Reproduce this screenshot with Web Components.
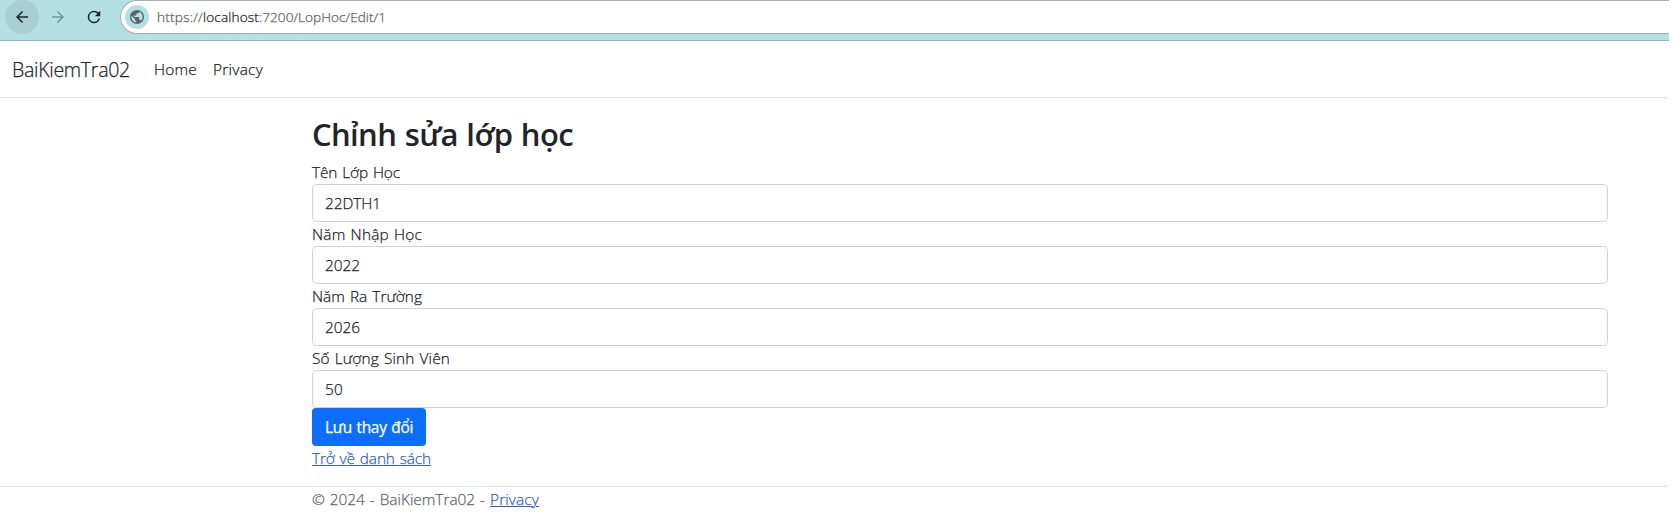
<!DOCTYPE html>
<html lang="vi"><head><meta charset="utf-8"><title>BaiKiemTra02</title>
<style>html,body{margin:0;background:#fff}body{font:300 15.4px/24px "Open Sans","Noto Sans",sans-serif;color:#212529;overflow:hidden;-webkit-text-stroke-width:.25px}</style></head><body>
<edit-page></edit-page>
<script>
const define=(name,html,init)=>customElements.define(name,class extends HTMLElement{
  constructor(){super();this.attachShadow({mode:'open'}).innerHTML=html;}
  connectedCallback(){if(init)init(this,this.shadowRoot);}
});

// Text run whose tracking is tuned so it occupies a given width.
define('fit-text','<style>:host{display:inline-block;white-space:pre;word-spacing:1px}</style><span><slot></slot></span>',(el,root)=>{
  const s=root.querySelector('span'),w=+el.getAttribute('w'),n=el.textContent.length;
  s.style.letterSpacing=(w-s.getBoundingClientRect().width)/n+'px';
});

define('browser-bar',`<style>
:host{display:flex;box-sizing:border-box;height:41px;width:1669px;background:#b5e0e3;border-bottom:1px solid #98b0b3}
.back{width:34px;height:34px;border-radius:50%;background:#a8d0d3;margin-left:5px;display:grid;place-items:center}
.btn{width:36px;height:34px;display:grid;place-items:center}
.btn:nth-of-type(2){margin-left:1px}
.url{flex:1;box-sizing:border-box;height:34px;margin-left:8px;background:#fff;border:1px solid #a9afb0;border-right:0;border-radius:17px 0 0 17px;display:flex;align-items:center;padding-left:4px;font:300 13.6px/20px "Open Sans","Noto Sans",sans-serif;color:#5a5e60}
.globe{width:24px;height:24px;border-radius:50%;background:#b5e0e3;display:grid;place-items:center;margin-right:8px}
.host{color:#202124} svg{display:block}
</style>
<div class="back"><svg width="16" height="16" viewBox="4 4 16 16" fill="#1c2526"><path d="M20 11H7.83l5.59-5.59L12 4l-8 8 8 8 1.41-1.41L7.83 13H20v-2z" transform="translate(12 12) scale(.75) translate(-12 -12)"/></svg></div>
<div class="btn"><svg width="16" height="16" viewBox="4 4 16 16" fill="#76979a"><path d="M12 4l-1.41 1.41L16.17 11H4v2h12.17l-5.58 5.59L12 20l8-8z" transform="translate(12 12) scale(.75) translate(-12 -12)"/></svg></div>
<div class="btn"><svg width="18" height="18" viewBox="3 3 18 18" fill="#1c2526"><path d="M17.65 6.35A7.95 7.95 0 0 0 12 4a8 8 0 1 0 7.73 10h-2.08A6 6 0 1 1 12 6c1.66 0 3.14.69 4.22 1.78L13 11h7V4l-2.35 2.35z" transform="translate(12 12) scale(.78) translate(-12 -12)"/></svg></div>
<div class="url"><span class="globe"><svg width="14" height="14" viewBox="2 2 20 20" fill="#5a666a"><path d="M12 2C6.48 2 2 6.48 2 12s4.48 10 10 10 10-4.48 10-10S17.52 2 12 2zm-1 17.93c-3.95-.49-7-3.85-7-7.93 0-.62.08-1.21.21-1.79L9 15v1c0 1.1.9 2 2 2v1.93zm6.9-2.54c-.26-.81-1-1.39-1.9-1.39h-1v-3c0-.55-.45-1-1-1H8v-2h2c.55 0 1-.45 1-1V7h2c1.1 0 2-.9 2-2v-.41c2.93 1.19 5 4.06 5 7.41 0 2.08-.8 3.97-2.1 5.39z"/></svg></span><fit-text w="46">https://</fit-text><fit-text w="56" class="host">localhost</fit-text><fit-text w="127">:7200/LopHoc/Edit/1</fit-text></div>`);

define('site-nav',`<style>
:host{display:flex;align-items:center;width:1669px;height:57px;box-sizing:border-box;border-bottom:1px solid #dee2e6;padding:2px 0 0 12px}
.brand{font-size:19.6px;line-height:30px;margin-right:24px}
.item{margin-right:16px}
</style><fit-text class="brand" w="118">BaiKiemTra02</fit-text><fit-text class="item" w="43">Home</fit-text><fit-text w="50">Privacy</fit-text>`);

define('form-field',`<style>
:host{display:block;height:62px}
::slotted([slot=label]){display:block;height:24px;line-height:26px}
.box{box-sizing:border-box;height:38px;border:1px solid #ced2d6;border-radius:4.5px;padding:7px 12px 5px;display:flex}
</style><slot name="label"></slot><div class="box"><slot></slot></div>`);

define('primary-button',`<style>
:host{display:block;box-sizing:border-box;width:114px;height:38px;border-radius:4px;background:#0d6efd;color:#fff;padding:8px 12px 6px 13px;font-weight:400}
</style><slot></slot>`);

define('text-link','<style>:host{display:inline-block;color:#3060cf}</style><slot></slot>',el=>{
  const t=el.textContent,f=document.createElement('fit-text');f.textContent=t;f.setAttribute('w',el.getAttribute('w'));
  el.shadowRoot.querySelector('slot').replaceWith(f);
  f.shadowRoot.querySelector('span').style.cssText+='text-decoration:underline 1px;text-underline-offset:1px';
});

define('edit-page',`<style>
:host{display:block;height:522px}
main{margin:16px 0 0 312px;width:1296px;height:372px}
h1{margin:0 0 8px;height:38px;font-size:31px;font-weight:600;line-height:40px;color:#212529;-webkit-text-stroke-width:0}
main text-link{height:24px;line-height:26px}
.foot{width:1669px;box-sizing:border-box;border-top:1px solid #dee2e6;padding:1px 0 0 312px;display:flex;color:#5f676f}
.foot text-link{margin-left:5px}
</style>
<browser-bar></browser-bar><site-nav></site-nav>
<main><h1><fit-text w="261">Chỉnh sửa lớp học</fit-text></h1>
<form-field><fit-text slot="label" w="88">Tên Lớp Học</fit-text><fit-text w="56">22DTH1</fit-text></form-field>
<form-field><fit-text slot="label" w="110">Năm Nhập Học</fit-text><fit-text w="35">2022</fit-text></form-field>
<form-field><fit-text slot="label" w="110">Năm Ra Trường</fit-text><fit-text w="35">2026</fit-text></form-field>
<form-field><fit-text slot="label" w="138">Số Lượng Sinh Viên</fit-text><fit-text w="18">50</fit-text></form-field>
<primary-button><fit-text w="88">Lưu thay đổi</fit-text></primary-button>
<text-link w="119">Trở về danh sách</text-link></main>
<div class="foot"><fit-text w="173">© 2024 - BaiKiemTra02 -</fit-text><text-link w="49">Privacy</text-link></div>`);
</script></body></html>
